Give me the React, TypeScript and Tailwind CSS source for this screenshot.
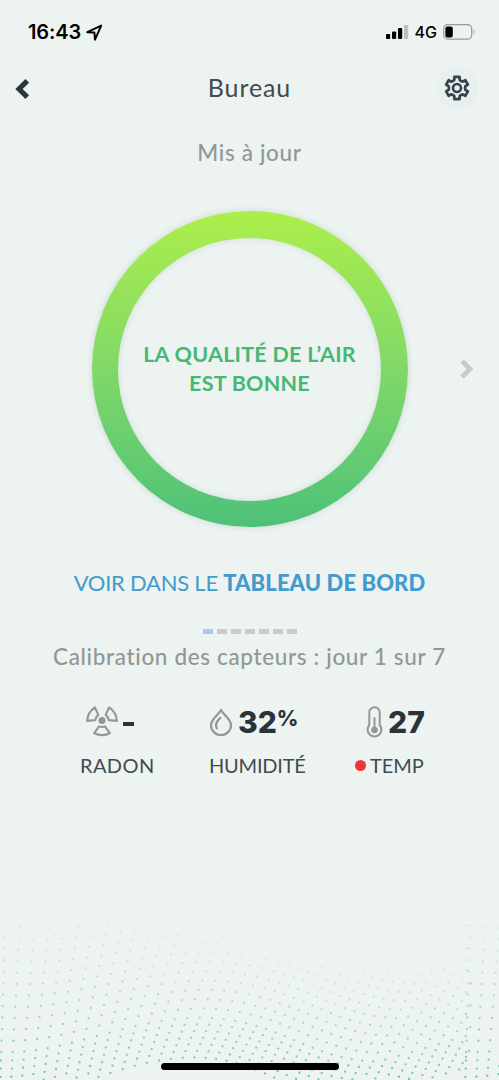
import React from 'react';

const STEPS = [1, 2, 3, 4, 5, 6, 7];
const CURRENT_STEP = 1;
const TILE = 465;

interface Dot {
  x: number;
  y: number;
  o: number;
}

// wavy dot field that fades out towards the top
function buildDots(): Dot[] {
  const dots: Dot[] = [];
  for (let tile = 0; tile < 2; tile++) {
    for (let col = 0; col < 46; col++) {
      for (let row = -3; row < 24; row++) {
        const c = 1 + col * 11.3;
        const base = row < 4 ? 217 - row * 8.3 : 192 - (row - 3) * 11.5;
        const rise = c < 380 ? 21 * (1 - Math.cos((2 * Math.PI * c) / 380)) : (c - 380) * 0.35;
        const slant = c < 230 ? 0.03 + (c / 230) * 0.5 : 0.53;
        const squeeze = 1 - 0.25 * Math.min(1, c / 230);
        const y = 230 - (230 - base) * squeeze - rise;
        const x = c + slant * (200 - y) + tile * TILE;
        if (tile === 0 && x > TILE + 6) continue;
        if (x > 500 || y < 25 || y > 220) continue;
        const fade = 30 + 55 * Math.min(1, Math.max(0, (x - 130) / 200)) * (x < TILE ? 1 : 0);
        const t = Math.max(0, Math.min(1, (y - fade) / (215 - fade)));
        dots.push({ x, y, o: Math.pow(t, 1.2) * 0.95 });
      }
    }
  }
  return dots;
}

const DOTS = buildDots();

function gearPath() {
  const pts: string[] = [];
  for (let i = 0; i < 6; i++) {
    const shape = [
      [-13, 11.4],
      [13, 11.4],
      [18, 8.6],
      [24, 8.2],
      [36, 8.2],
      [42, 8.6],
    ];
    for (const [deg, r] of shape) {
      const a = ((i * 60 + deg - 90) * Math.PI) / 180;
      pts.push(`${(14 + r * Math.cos(a)).toFixed(2)} ${(14 + r * Math.sin(a)).toFixed(2)}`);
    }
  }
  return `M${pts.join('L')}Z`;
}

function StatusBar() {
  return (
    <div className="flex h-16 items-center justify-between pl-[28px] pr-[23px] font-['Inter',sans-serif] text-black">
      <div className="flex items-center">
        <span className="text-[20px] font-semibold tracking-[-0.1px]">16:43</span>
        <svg className="ml-[5px]" width="17" height="17" viewBox="0 0 17 17" fill="none">
          <path d="M1.3 8.2 15.2 1.6 9 15.6 8.4 8.5Z" stroke="#000" strokeWidth="2" strokeLinejoin="round" />
        </svg>
      </div>
      <div className="flex items-center">
        <svg width="23" height="16" viewBox="0 0 23 16">
          <rect x="0" y="10" width="4.2" height="5" rx="1" />
          <rect x="6" y="7.5" width="4.2" height="7.5" rx="1" />
          <rect x="12" y="4" width="4.2" height="11" rx="1" />
          <rect x="18" y="1" width="4.2" height="14" rx="1" fill="#bcc0bf" />
        </svg>
        <span className="ml-[6px] text-[16px] font-medium">4G</span>
        <svg className="ml-[6px]" width="33" height="16" viewBox="0 0 33 16">
          <rect x="0.7" y="0.7" width="28" height="14.4" rx="4" fill="none" stroke="#969b99" strokeWidth="1.2" />
          <rect x="2.4" y="2.4" width="7.4" height="11" rx="2" />
          <path d="M30.5 5.5q2 2.3 0 4.8Z" fill="#8b8f8e" />
        </svg>
      </div>
    </div>
  );
}

function Header() {
  return (
    <div className="flex h-12 items-center justify-between pl-[15px] pr-[21px]">
      <svg className="mt-[2px]" width="16" height="22" viewBox="0 0 16 22" fill="none">
        <path d="M12.3 2.8 4 11l8.3 8.2" stroke="#2b383d" strokeWidth="5.2" />
      </svg>
      <h1 className="ml-[32px] text-[25px] tracking-[0.9px] text-[#414b50]">Bureau</h1>
      <button className="flex h-[42px] w-[42px] items-center justify-center rounded-full bg-[#e8efef]">
        <svg width="28" height="28" viewBox="0 0 28 28" fill="none" stroke="#36434a" strokeLinejoin="round">
          <path d={gearPath()} strokeWidth="2.7" />
          <circle cx="14" cy="14" r="4" strokeWidth="2.6" />
        </svg>
      </button>
    </div>
  );
}

function QualityRing() {
  return (
    <div className="flex h-[316px] w-[316px] items-center justify-center rounded-full bg-linear-to-b from-[#acef49] to-[#4dc178] shadow-[0_0_6px_rgba(60,110,80,0.2)]">
      <div className="flex h-[263px] w-[263px] items-center justify-center rounded-full bg-[#ecf3f1] shadow-[inset_0_0_6px_rgba(60,110,80,0.16)]">
        <p className="whitespace-nowrap text-center text-[21.5px] font-bold leading-[29px] tracking-[0.25px] text-[#46b874]">
          LA QUALITÉ DE L’AIR
          <br />
          EST BONNE
        </p>
      </div>
    </div>
  );
}

function RadonIcon() {
  const blade = 'M12.9 20.6 8.2 27.2Q16 31 23.8 27.2L19.1 20.6Q16 21.4 12.9 20.6Z';
  return (
    <svg width="32" height="32" viewBox="0 0 32 32" fill="none" stroke="#919998" strokeWidth="2.1" strokeLinejoin="round">
      <path d={blade} />
      <path d={blade} transform="rotate(120 16 14.5)" />
      <path d={blade} transform="rotate(240 16 14.5)" />
      <circle cx="16" cy="14.5" r="3.5" fill="#919998" stroke="none" />
    </svg>
  );
}

function DropIcon() {
  return (
    <svg width="24" height="29" viewBox="0 0 24 29" fill="none" stroke="#919998" strokeWidth="2.2" strokeLinecap="round" strokeLinejoin="round">
      <path d="M12 2C9.5 7 2 11.2 2 17.2a10 9.8 0 0 0 20 0C22 11.2 14.5 7 12 2Z" />
      <path d="M11.4 9.8C7.6 13 5.7 16.4 7.9 20.4" />
    </svg>
  );
}

function ThermometerIcon() {
  return (
    <svg width="17" height="32" viewBox="0 0 17 32" fill="none" stroke="#919998" strokeWidth="2">
      <path d="M3.3 19V6.4a5.2 5.2 0 0 1 10.4 0V19a6.9 6.9 0 1 1-10.4 0Z" />
      <path d="M8.5 12v12" strokeLinecap="round" />
      <circle cx="8.5" cy="24" r="2.3" fill="#919998" />
    </svg>
  );
}

interface SensorProps {
  icon: React.ReactNode;
  value: React.ReactNode;
  label: string;
  className: string;
  labelClass: string;
  alert?: boolean;
}

function Sensor({ icon, value, label, className, labelClass, alert }: SensorProps) {
  return (
    <div className={className}>
      <div className="flex h-9 items-center whitespace-nowrap font-['Inter',sans-serif] text-[30px] font-extrabold text-[#29343a]">
        {icon}
        {value}
      </div>
      <div className="mt-[11px] flex h-7 items-center text-[20px] text-[#414b50]">
        {alert && <span className="mr-[4px] mt-px h-[11px] w-[11px] rounded-full bg-[#ee3636]" />}
        <span className={labelClass}>{label}</span>
      </div>
    </div>
  );
}

export default function App() {
  return (
    <main className="flex h-[1080px] w-[499px] flex-col overflow-hidden bg-[#ecf3f1] font-['Lato',sans-serif]">
      <StatusBar />
      <Header />
      <p className="mt-[25px] h-8 text-center text-[22.5px] font-medium leading-8 tracking-[0.65px] text-[#919796]">Mis à jour</p>

      <div className="mt-[42px] flex items-center justify-end pr-[25.5px]">
        <QualityRing />
        <svg className="ml-[51px]" width="15" height="22" viewBox="0 0 15 22" fill="none">
          <path d="m3 3 8 8-8 8" stroke="#c3cccb" strokeWidth="4.6" />
        </svg>
      </div>

      <a className="mt-[39px] flex h-8 items-center justify-center whitespace-pre text-[22px] text-[#449acb]">
        <span className="tracking-[-0.25px]">VOIR DANS LE </span>
        <span className="font-black tracking-[0.1px]">TABLEAU DE BORD</span>
      </a>

      <div className="mt-[31px] flex justify-center gap-[4px]">
        {STEPS.map((step) => (
          <span key={step} className={step === CURRENT_STEP ? 'h-[5px] w-[10px] bg-[#adc6ee]' : 'h-[5px] w-[10px] bg-[#caccca]'} />
        ))}
      </div>
      <p className="mt-[7px] h-8 whitespace-nowrap text-center text-[22.5px] font-medium leading-8 tracking-[0.65px] text-[#919796]">
        Calibration des capteurs : jour 1 sur 7
      </p>

      <div className="mt-[31px] flex h-[77px]">
        <Sensor
          className="ml-[80px] w-[129px]"
          icon={<span className="ml-[6px] mr-[5px]"><RadonIcon /></span>}
          value={<span className="mt-[4px] h-[3.5px] w-[11px] bg-[#29343a]" />}
          label="RADON"
          labelClass="tracking-[0.4px]"
        />
        <Sensor
          className="w-[146px]"
          icon={<span className="mr-[5px]"><DropIcon /></span>}
          value={<>32<span className="mb-[6px] text-[21px]">%</span></>}
          label="HUMIDITÉ"
          labelClass="tracking-[-0.2px]"
        />
        <Sensor
          className="w-[100px]"
          icon={<span className="ml-[11px] mr-[5px]"><ThermometerIcon /></span>}
          value="27"
          label="TEMP"
          labelClass="tracking-[-0.1px]"
          alert
        />
      </div>

      <div className="relative mt-auto h-[220px]">
        <svg width="499" height="220" viewBox="0 0 499 220" fill="#6fc29a">
          {DOTS.map((d, i) => (
            <circle key={i} cx={d.x} cy={d.y} r="1.15" opacity={d.o} />
          ))}
        </svg>
        <div className="absolute bottom-[10px] left-[161px] h-[7px] w-[178px] rounded-full bg-black" />
      </div>
    </main>
  );
}
